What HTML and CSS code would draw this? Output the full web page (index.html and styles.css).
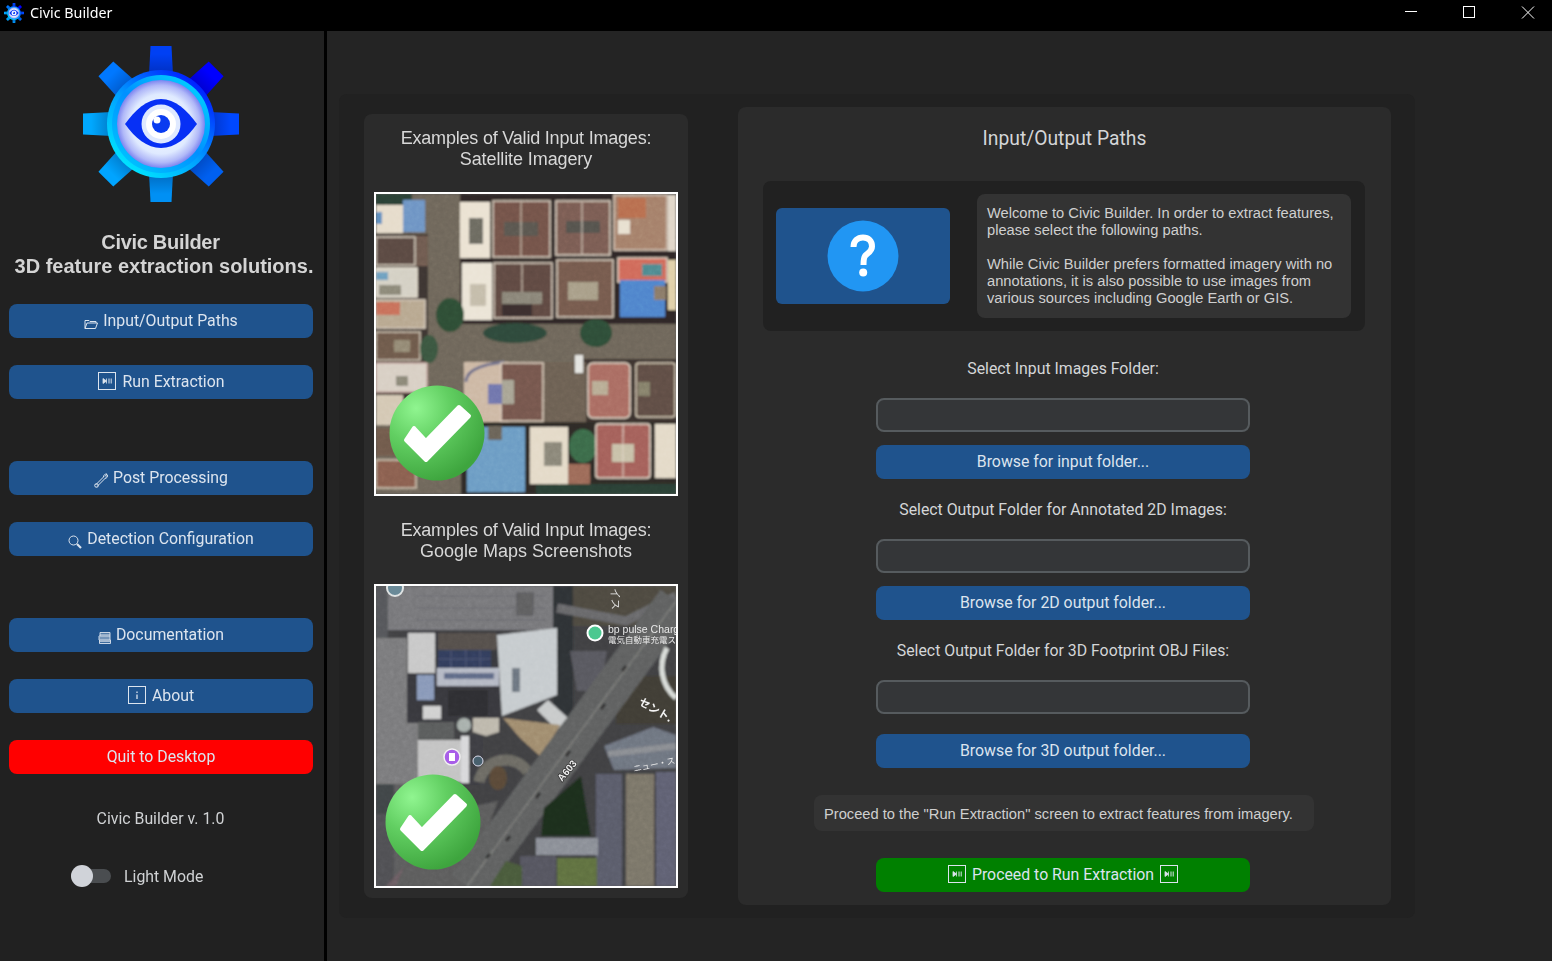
FILE: index.html
```html
<!DOCTYPE html>
<html lang="en">
<head>
<meta charset="utf-8">
<title>Civic Builder</title>
<link rel="stylesheet" href="styles.css">
</head>
<body>
<svg class="defs" width="0" height="0" aria-hidden="true">
  <defs>
    <linearGradient id="toothShade" gradientUnits="userSpaceOnUse" x1="0" y1="8" x2="0" y2="30">
      <stop offset="0" stop-color="#000030" stop-opacity="0"/>
      <stop offset="1" stop-color="#000030" stop-opacity="0.28"/>
    </linearGradient>
    <linearGradient id="ringGrad" gradientUnits="userSpaceOnUse" x1="40" y1="125" x2="118" y2="30">
      <stop offset="0" stop-color="#00eaff"/>
      <stop offset="0.45" stop-color="#00a0ff"/>
      <stop offset="1" stop-color="#0010ff"/>
    </linearGradient>
    <linearGradient id="ringInner" gradientUnits="userSpaceOnUse" x1="40" y1="125" x2="118" y2="30">
      <stop offset="0" stop-color="#00c8ff"/>
      <stop offset="0.5" stop-color="#0090ff"/>
      <stop offset="1" stop-color="#00d8ff"/>
    </linearGradient>
    <radialGradient id="discGrad" cx="0.5" cy="0.5" r="0.5">
      <stop offset="0" stop-color="#ffffff"/>
      <stop offset="0.68" stop-color="#dfeaff"/>
      <stop offset="0.88" stop-color="#b0b8f8"/>
      <stop offset="1" stop-color="#7c84f0"/>
    </radialGradient>
    <radialGradient id="ballGrad" cx="0.28" cy="0.24" r="0.8">
      <stop offset="0" stop-color="#90f590"/>
      <stop offset="0.45" stop-color="#62cf62"/>
      <stop offset="1" stop-color="#3ea53e"/>
    </radialGradient>
    <filter id="soft" x="-2%" y="-2%" width="104%" height="104%"><feGaussianBlur stdDeviation="1"/></filter>
    <filter id="noise" x="0" y="0" width="100%" height="100%">
      <feTurbulence type="fractalNoise" baseFrequency="0.22" numOctaves="3" seed="4"/>
      <feColorMatrix type="saturate" values="0"/>
    </filter>
    <g id="tooth">
      <path d="M67.500 0H88.500L90 30H66Z"/>
      <path d="M67.500 0H88.500L90 30H66Z" fill="url(#toothShade)"/>
    </g>
    <symbol id="logo" viewBox="0 0 156 156">
      <use href="#tooth" fill="#0040f4"/>
      <use href="#tooth" fill="#0000ff" transform="rotate(45 78 78)"/>
      <use href="#tooth" fill="#0048ff" transform="rotate(90 78 78)"/>
      <use href="#tooth" fill="#0060f0" transform="rotate(135 78 78)"/>
      <use href="#tooth" fill="#0090f4" transform="rotate(180 78 78)"/>
      <use href="#tooth" fill="#00a4ff" transform="rotate(225 78 78)"/>
      <use href="#tooth" fill="#00a8ff" transform="rotate(270 78 78)"/>
      <use href="#tooth" fill="#0078ff" transform="rotate(315 78 78)"/>
      <circle cx="78" cy="78" r="54" fill="url(#ringGrad)"/>
      <circle cx="78" cy="78" r="49" fill="url(#ringInner)"/>
      <circle cx="78" cy="78" r="44" fill="url(#discGrad)"/>
      <path d="M42 78C52 64 64 53 78 53S104 64 114 78C104 92 92 102 78 102S52 92 42 78Z" fill="#0730f5"/>
      <circle cx="78" cy="78" r="19.500" fill="#dfe9ff"/>
      <circle cx="78" cy="78" r="15" fill="#ffffff"/>
      <circle cx="78" cy="78" r="9" fill="#0a3cf0"/>
      <circle cx="74" cy="74" r="3.500" fill="#ffffff"/>
    </symbol>
    <symbol id="ic-run" viewBox="0 0 18 18">
      <rect x="0.500" y="0.500" width="17" height="17" fill="none" stroke="currentColor"/>
      <path d="M5 6.500V11.500L8.500 9Z M8.500 6.500V11.500" fill="currentColor" stroke="currentColor" stroke-width="0.800"/>
      <path d="M11 6.500V11.500M13.200 6.500V11.500" stroke="currentColor" fill="none"/>
    </symbol>
    <symbol id="ball" viewBox="-48 -48 96 96">
      <circle r="47.500" fill="url(#ballGrad)"/>
      <path d="M-31 7-23-5-11 8 22-26 32-17-11 27Z" fill="#fff" stroke="#fff" stroke-width="4" stroke-linejoin="round"/>
    </symbol>
  </defs>
</svg>

<header class="titlebar">
  <svg class="title-icon" aria-hidden="true"><use href="#logo"/></svg>
  <span class="title-text">Civic Builder</span>
  <div class="win-controls">
    <svg class="win-btn" viewBox="0 0 58 31" aria-hidden="true"><path d="M27 11.500H39" stroke="#fff"/></svg>
    <svg class="win-btn" viewBox="0 0 58 31" aria-hidden="true"><rect x="27.500" y="6.500" width="11" height="11" fill="none" stroke="#fff"/></svg>
    <svg class="win-btn" viewBox="0 0 58 31" aria-hidden="true"><path d="M28 6.500 40 18.500M40 6.500 28 18.500" stroke="#fff"/></svg>
  </div>
</header>

<div class="app">
  <aside class="sidebar">
    <svg class="logo" aria-hidden="true"><use href="#logo"/></svg>
    <h1 class="brand"><span class="brand-top">Civic Builder</span><span class="brand-sub">3D feature extraction solutions.</span></h1>

    <nav class="nav">
      <div class="nav-group">
        <button class="btn">
          <svg class="ic ic-low" width="14" height="12" viewBox="0 0 14 12" aria-hidden="true"><path d="M1 10.500V2.500H5L6 3.500H12V5M1 10.500H11.500L13.500 5H3Z" fill="none" stroke="currentColor"/></svg>
          <span>Input/Output Paths</span>
        </button>
        <button class="btn btn-run">
          <svg class="ic ic-box" width="18" height="18" aria-hidden="true"><use href="#ic-run"/></svg>
          <span>Run Extraction</span>
        </button>
      </div>
      <div class="nav-group">
        <button class="btn">
          <svg class="ic ic-low" width="14" height="15" viewBox="0 0 14 15" aria-hidden="true"><path d="M1.500 12 10 3.500M3 13.500 11.500 5" stroke="currentColor" fill="none"/><circle cx="2.500" cy="12.500" r="1.800" fill="none" stroke="currentColor"/><path d="M9.500 4C9.500 2 11 .8 13 1L11.500 2.800 12.300 3.500 13.800 1.800C14 3.800 12.800 5.300 11 5.200" fill="none" stroke="currentColor"/></svg>
          <span>Post Processing</span>
        </button>
        <button class="btn">
          <svg class="ic ic-low" width="14" height="14" viewBox="0 0 14 14" aria-hidden="true"><circle cx="5.500" cy="5.500" r="4.500" fill="none" stroke="currentColor"/><path d="M9 9 13 13" stroke="currentColor" stroke-width="2.200"/></svg>
          <span>Detection Configuration</span>
        </button>
      </div>
      <div class="nav-group">
        <button class="btn">
          <svg class="ic ic-low" width="13" height="12" viewBox="0 0 13 12" aria-hidden="true"><path d="M2 .5H12V4H2ZM2 2.200H12M1 4H12V8H1ZM1 6H12M1.500 8H12.500V11.500H1.500ZM1.500 9.700H12.500" fill="none" stroke="currentColor" stroke-width="0.900"/></svg>
          <span>Documentation</span>
        </button>
        <button class="btn">
          <svg class="ic ic-box" width="18" height="18" viewBox="0 0 18 18" aria-hidden="true"><rect x="0.500" y="0.500" width="17" height="17" fill="none" stroke="currentColor"/><path d="M9 5.500V7M9 8.500V13" stroke="currentColor" stroke-width="1.300"/></svg>
          <span>About</span>
        </button>
        <button class="btn btn-danger"><span>Quit to Desktop</span></button>
      </div>
    </nav>

    <p class="version">Civic Builder v. 1.0</p>
    <div class="mode-row">
      <span class="switch"><span class="switch-knob"></span></span>
      <span class="mode-label">Light Mode</span>
    </div>
  </aside>

  <main class="main">
    <section class="panel">
      <div class="examples">
        <h2 class="ex-title"><span class="ex-lead">Examples of Valid Input Images:</span><br><span class="ex-sub">Satellite Imagery</span></h2>
        <svg class="photo" viewBox="0 0 300 300" role="img" aria-label="Satellite imagery example">
          <g filter="url(#soft)">
            <rect width="300" height="300" fill="#6e665a"/>
            <rect x="84" y="0" width="216" height="130" fill="#2f2825"/>
            <rect x="0" y="40" width="52" height="190" fill="#3e3530"/>
            <rect x="205" y="165" width="95" height="135" fill="#3a332d"/>
            <rect x="85" y="228" width="215" height="72" fill="#2e2a28"/>
            <rect x="0" y="0" width="36" height="11" fill="#2c4036"/>
            <rect x="0" y="11" width="27" height="28" fill="#e6dccb"/><rect x="0" y="18" width="6" height="12" fill="#5f8fc0"/>
            <rect x="27" y="6" width="22" height="32" fill="#6e94c4"/>
            <rect x="0" y="43" width="39" height="28" fill="#5a4a42" stroke="#d9cdbd" stroke-width="1.500"/>
            <rect x="40" y="42" width="12" height="30" fill="#6e5a50"/>
            <rect x="0" y="74" width="41" height="29" fill="#d4d0c4" stroke="#e8e0d0" stroke-width="1.500"/><rect x="0" y="78" width="12" height="8" fill="#6ea0c0"/><rect x="3" y="91" width="22" height="10" fill="#8c8878"/>
            <rect x="0" y="106" width="49" height="28" fill="#b8a890" stroke="#d8ccbc" stroke-width="1.500"/><rect x="0" y="108" width="24" height="13" fill="#c8705a"/>
            <rect x="0" y="138" width="44" height="28" fill="#6e5a4c" stroke="#cfc3b0" stroke-width="1.500"/><rect x="18" y="146" width="16" height="12" fill="#948a74"/>
            <rect x="0" y="169" width="51" height="29" fill="#d8cfc4" stroke="#c8a8a0" stroke-width="1.500"/><rect x="20" y="182" width="12" height="10" fill="#8c8878"/>
            <rect x="0" y="201" width="27" height="30" fill="#d4c8b4"/>
            <rect x="0" y="234" width="24" height="28" fill="#705a4c"/>
            <rect x="0" y="266" width="40" height="28" fill="#8a5e50" stroke="#cfc3b0" stroke-width="1.500"/>
            <rect x="84" y="8" width="30" height="56" fill="#ebe2d2"/><rect x="93" y="24" width="14" height="26" fill="#6c6a60"/>
            <rect x="117" y="7" width="57" height="56" fill="#735349" stroke="#dccfc0" stroke-width="1.500"/><rect x="128" y="28" width="34" height="14" fill="#5a5650"/><path d="M145 8V62" stroke="#d8ccbc"/>
            <rect x="180" y="7" width="54" height="54" fill="#7a5c52" stroke="#e0d4c4" stroke-width="1.500"/><rect x="190" y="27" width="34" height="12" fill="#54524e"/><path d="M206 8V60" stroke="#e0d4c4"/>
            <rect x="238" y="1" width="53" height="55" fill="#a5806a" stroke="#dcccbc" stroke-width="1.500"/><rect x="242" y="4" width="28" height="20" fill="#b86e50"/><rect x="242" y="26" width="12" height="14" fill="#e8e0d0"/>
            <rect x="292" y="1" width="8" height="56" fill="#e0d6c8"/>
            <rect x="86" y="69" width="30" height="57" fill="#ebe4d6"/><rect x="94" y="90" width="16" height="22" fill="#c4bcaa"/>
            <rect x="118" y="69" width="58" height="55" fill="#5f4842" stroke="#dccfc0" stroke-width="1.500"/><rect x="126" y="98" width="40" height="12" fill="#8a8578"/><rect x="126" y="110" width="30" height="12" fill="#3a2e2e"/><path d="M146 70V98" stroke="#dccfc0"/>
            <rect x="181" y="66" width="56" height="57" fill="#755a4e" stroke="#dccfc0" stroke-width="1.500"/><rect x="192" y="88" width="30" height="18" fill="#a89e88"/>
            <rect x="242" y="64" width="49" height="24" fill="#d06a5a" stroke="#e0d4c4" stroke-width="1.500"/><rect x="266" y="70" width="20" height="12" fill="#4f8a90"/>
            <rect x="244" y="86" width="45" height="37" fill="#4f84cc"/><rect x="278" y="92" width="12" height="14" fill="#8a7a68"/>
            <rect x="292" y="66" width="8" height="50" fill="#e0d0a8"/>
            <ellipse cx="74" cy="121" rx="14" ry="17" fill="#2f4d36"/>
            <ellipse cx="139" cy="139" rx="32" ry="10" fill="#2e4a3a"/>
            <ellipse cx="220" cy="139" rx="16" ry="14" fill="#2f4d38"/>
            <ellipse cx="53" cy="155" rx="9" ry="14" fill="#3a5640"/>
            <rect x="88" y="168" width="45" height="60" fill="#cdb8a4"/>
            <path d="M90 188Q90 172 128 168" stroke="#70708a" stroke-width="3" fill="none"/>
            <rect x="125" y="169" width="42" height="58" fill="#74574d" stroke="#ddcdbc" stroke-width="1.500"/>
            <rect x="112" y="190" width="20" height="20" fill="#6f74ac"/><rect x="126" y="186" width="12" height="24" fill="#a8a494"/>
            <rect x="168" y="168" width="42" height="60" fill="#6c6152"/>
            <rect x="199" y="161" width="8" height="18" fill="#e4e4e0"/>
            <rect x="212" y="169" width="42" height="55" rx="5" fill="#aa6c62" stroke="#e4d8c8" stroke-width="1.500"/><rect x="216" y="187" width="16" height="14" fill="#b8ac94"/>
            <rect x="260" y="169" width="39" height="54" rx="3" fill="#5e4d44" stroke="#d4c8b4" stroke-width="1.500"/><rect x="262" y="188" width="12" height="14" fill="#85806a"/>
            <rect x="91" y="233" width="58" height="65" fill="#6c9cc4"/><rect x="112" y="232" width="14" height="14" fill="#6a6458"/>
            <rect x="154" y="233" width="38" height="57" fill="#e4dac8"/><rect x="168" y="248" width="18" height="24" fill="#8a8678"/>
            <rect x="192" y="270" width="22" height="20" fill="#9c6a58"/>
            <ellipse cx="207" cy="252" rx="14" ry="17" fill="#3a6a48"/>
            <rect x="220" y="230" width="54" height="54" rx="3" fill="#a4605a" stroke="#e4d8c8" stroke-width="1.500"/><rect x="236" y="250" width="22" height="18" fill="#c8c0a8"/><path d="M247 230V284" stroke="#e4d8c8"/>
            <rect x="279" y="230" width="21" height="54" fill="#e4dac8"/>
            <rect x="160" y="290" width="140" height="10" fill="#2a4034"/>
          </g>
          <rect class="grain" width="300" height="300" filter="url(#noise)"/>
          <use href="#ball" x="13" y="191" width="96" height="96"/>
        </svg>

        <h2 class="ex-title ex-title-second"><span class="ex-lead">Examples of Valid Input Images:</span><br>Google Maps Screenshots</h2>
        <svg class="photo" viewBox="0 0 300 300" role="img" aria-label="Google Maps screenshot example">
          <g filter="url(#soft)">
            <rect width="300" height="300" fill="#3f3f42"/>
            <rect x="0" y="0" width="177" height="44" fill="#77777a"/>
            <path d="M40 10H170M40 22H170M40 34H170" stroke="#6a6a6d"/>
            <rect x="140" y="6" width="18" height="24" fill="#5e5e60"/>
            <rect x="0" y="0" width="12" height="52" fill="#55565a"/>
            <rect x="0" y="52" width="42" height="148" fill="#7a7a7c"/>
            <rect x="0" y="198" width="18" height="30" fill="#3f4447"/>
            <rect x="18" y="198" width="30" height="102" fill="#5b5b5d"/>
            <rect x="0" y="228" width="18" height="72" fill="#505052"/>
            <path d="M10 300 45 262 70 300Z" fill="#6b5c62"/>
            <rect x="177" y="0" width="20" height="140" fill="#2e3036"/>
            <rect x="197" y="0" width="103" height="40" fill="#4d4a40"/>
            <path d="M181 22 250 35 300 10" stroke="#68686a" stroke-width="9" fill="none"/>
            <rect x="31" y="45" width="93" height="92" fill="#39393d"/>
            <rect x="32" y="47" width="27" height="40" fill="#c8c8c8"/>
            <rect x="62" y="47" width="59" height="17" fill="#55504c"/>
            <rect x="62" y="64" width="53" height="18" fill="#333c5c"/>
            <path d="M75 64V82M90 64V82M104 64V82M62 73H115" stroke="#4c5674"/>
            <rect x="61" y="82" width="62" height="18" fill="#b4b8c4"/>
            <rect x="68" y="87" width="50" height="6" fill="#5e6a86"/>
            <rect x="41" y="89" width="17" height="25" fill="#8898b8"/>
            <rect x="72" y="104" width="40" height="26" fill="#2f2f33"/>
            <rect x="47" y="120" width="18" height="13" fill="#d0d0d0"/>
            <path d="M121 49 181 42 181 109 126 130Z" fill="#c6cbce"/>
            <rect x="136" y="82" width="8" height="24" fill="#6c7480"/>
            <path d="M161 124 172 114 192 132 181 144Z" fill="#c8caca"/>
            <path d="M97 132H123V146L110 150 97 146Z" fill="#bdb8ac"/>
            <rect x="42" y="136" width="36" height="17" fill="#5a5c5c"/>
            <circle cx="88" cy="139" r="7" fill="#a8b0ac"/>
            <rect x="42" y="154" width="43" height="42" fill="#c3c3c3"/>
            <rect x="85" y="150" width="8" height="47" fill="#d8d8da"/>
            <rect x="94" y="149" width="13" height="50" fill="#3c3e42"/>
            <path d="M127 132 184 139 166 172 144 152Z" fill="#a08c6e"/>
            <path d="M103 196A27 27 0 0 1 152 186" stroke="#6c6a64" stroke-width="11" fill="none"/>
            <ellipse cx="122" cy="192" rx="9" ry="12" fill="#5a4a38"/>
            <path d="M50 230 122 215 90 300H20Z" fill="#5c5c5c"/>
            <path d="M194 65 231 65 224 105 201 105Z" fill="#58585e"/>
            <rect x="240" y="90" width="60" height="48" fill="#403c34"/>
            <path d="M91 300 300 15" stroke="#5f6060" stroke-width="38" fill="none"/>
            <path d="M91 300 300 15" stroke="#7a7a78" stroke-width="1.500" fill="none"/>
            <path d="M130 255 134 250M160 212 164 207M190 170 194 165M225 123 229 118M110 272 114 268M246 85 250 80" stroke="#333" stroke-width="3"/>
            <path d="M291 62A40 40 0 0 0 300 112" stroke="#d8dcd8" stroke-width="5" fill="none"/>
            <path d="M228 160 277 141 300 149V182L238 184Z" fill="#6e7480"/>
            <path d="M232 168 300 160" stroke="#8a8d92" stroke-width="6"/>
            <rect x="220" y="188" width="26" height="112" fill="#5a5c6a"/>
            <rect x="250" y="188" width="28" height="112" fill="#7a7468"/>
            <rect x="280" y="186" width="20" height="114" fill="#5e6072"/>
            <path d="M168 222 205 190 215 250 165 250Z" fill="#1f2d1e"/>
            <rect x="160" y="252" width="62" height="17" fill="#8a8e96"/>
            <rect x="181" y="272" width="40" height="28" fill="#5f7040"/>
            <rect x="144" y="270" width="36" height="30" fill="#55555f"/>
            <path d="M114 300 130 275 146 280V300Z" fill="#4a5a3a"/>
          </g>
          <rect class="grain" width="300" height="300" filter="url(#noise)"/>
          <circle cx="19" cy="2" r="8" fill="#6a8a98" stroke="#e0e4e4" stroke-width="2"/>
          <circle cx="219" cy="47" r="8.500" fill="#ffffff"/><circle cx="219" cy="47" r="6.500" fill="#4cc890"/>
          <text class="map-label" x="232" y="47">bp pulse Charg</text>
          <text class="map-label map-jp" x="232" y="57">電気自動車充電ス</text>
          <text class="map-label" transform="rotate(90 236 2)" x="236" y="2">イス</text>
          <text class="map-label map-big" transform="rotate(30 262 118)" x="262" y="118">セント.</text>
          <text class="map-label map-jp" transform="rotate(-12 258 186)" x="258" y="186">ニュー・ス</text>
          <text class="map-label map-a603" transform="rotate(-50 186 196)" x="186" y="196">A603</text>
          <circle cx="76" cy="171" r="8" fill="#a85ee8" stroke="#f2f2f2" stroke-width="1.500"/><rect x="73" y="167" width="6" height="8" fill="#fff"/>
          <circle cx="102" cy="175" r="5" fill="#48606e" stroke="#dde" stroke-width="1"/>
          <use href="#ball" x="9" y="188" width="96" height="96"/>
        </svg>
      </div>

      <div class="paths">
        <h2 class="paths-title">Input/Output Paths</h2>
        <div class="intro">
          <button class="help-btn" aria-label="Help">
            <svg width="72" height="72" viewBox="0 0 72 72" aria-hidden="true"><circle cx="36" cy="36" r="35.500" fill="#2196f3"/><path d="M26.500 27C26.500 21 30.500 17.500 36 17.500S45 21 45 26.500C45 31.500 40.500 33 38 36 36.500 38 36.500 41 36.500 45" fill="none" stroke="#fff" stroke-width="6"/><circle cx="36.200" cy="52.500" r="4" fill="#fff"/></svg>
          </button>
          <p class="intro-text">Welcome to Civic Builder. In order to extract features,<br>please select the following paths.<br><br>While Civic Builder prefers formatted imagery with no<br>annotations, it is also possible to use images from<br>various sources including Google Earth or GIS.</p>
        </div>

        <div class="fields">
          <label class="field-label field-label-first">Select Input Images Folder:</label>
          <div class="entry"></div>
          <button class="btn btn-near">Browse for input folder...</button>

          <label class="field-label">Select Output Folder for Annotated 2D Images:</label>
          <div class="entry"></div>
          <button class="btn btn-near">Browse for 2D output folder...</button>

          <label class="field-label">Select Output Folder for 3D Footprint OBJ Files:</label>
          <div class="entry"></div>
          <button class="btn btn-far">Browse for 3D output folder...</button>
        </div>

        <p class="proceed-note">Proceed to the "Run Extraction" screen to extract features from imagery.</p>
        <div class="fields">
          <button class="btn btn-go">
            <svg class="ic ic-box" width="18" height="18" aria-hidden="true"><use href="#ic-run"/></svg>
            <span>Proceed to Run Extraction</span>
            <svg class="ic ic-box" width="18" height="18" aria-hidden="true"><use href="#ic-run"/></svg>
          </button>
        </div>
      </div>
    </section>
  </main>
</div>
</body>
</html>
```

FILE: styles.css
```css
* { box-sizing: border-box; }

html, body {
  margin: 0;
  height: 100%;
  overflow: hidden;
}

body {
  background: #242424;
  color: #dce4ee;
  font-family: Roboto, "Liberation Sans", sans-serif;
  font-size: 15.850px;
  display: flex;
  flex-direction: column;
}

.defs { position: absolute; }

/* Title bar */
.titlebar {
  flex: 0 0 31px;
  display: flex;
  align-items: flex-start;
  background: #000;
  color: #fff;
}
.title-icon { width: 20px; height: 20px; margin: 3px 0 0 4px; }
.title-text {
  margin: 3px 0 0 6px;
  font: 14.300px/20px "Noto Sans", "Open Sans", sans-serif;
}
.win-controls { margin-left: auto; display: flex; }
.win-btn { width: 58px; height: 31px; display: block; }

/* App frame */
.app { flex: 1; display: flex; min-height: 0; }

.sidebar {
  flex: 0 0 327px;
  background: #212121;
  border-right: 3px solid #000;
  padding-top: 15px;
  display: flex;
  flex-direction: column;
}
.logo { width: 156px; height: 156px; margin-left: 83px; display: block; }
.brand {
  margin: 28px 0 0;
  width: 321px;
  font: bold 20px/24px "Liberation Sans", Arial, sans-serif;
  color: #d4d4d4;
  text-align: center;
}
.brand-top { display: block; letter-spacing: -0.3px; }
.brand-sub { display: block; margin-left: 7px; white-space: nowrap; }

.nav {
  margin: 26px 0 0 9px;
  width: 304px;
  display: flex;
  flex-direction: column;
  gap: 62px;
}
.nav-group { display: flex; flex-direction: column; gap: 27px; }

.btn {
  height: 34px;
  width: 100%;
  flex: none;
  border: 0;
  border-radius: 8px;
  background: #1f538d;
  color: #dce4ee;
  font: 15.850px/20px Roboto, sans-serif;
  display: flex;
  align-items: center;
  justify-content: center;
  gap: 6px;
  padding: 0;
}
.btn-danger { background: #ff0000; }
.btn-run { padding-left: 1px; }
.ic { flex: none; display: block; }
.ic-low { margin-top: 5px; margin-right: -1px; }
.ic-box { margin-top: -2px; }

.version {
  margin: 35px 0 0;
  width: 321px;
  text-align: center;
  line-height: 20px;
  color: #d0d2d4;
}
.mode-row {
  margin: 36px 0 0 71px;
  display: flex;
  align-items: center;
  height: 22px;
}
.switch {
  position: relative;
  width: 40px;
  height: 14px;
  border-radius: 7px;
  background: #4a4d50;
}
.switch-knob {
  position: absolute;
  left: 0;
  top: -4px;
  width: 22px;
  height: 22px;
  border-radius: 50%;
  background: #d0d3d9;
}
.mode-label { margin-left: 13px; color: #d0d2d4; }

/* Main */
.main { flex: 1; padding: 63px 0 0 12px; }

.panel {
  width: 1076px;
  height: 824px;
  background: #212121;
  border-radius: 8px;
  display: flex;
  align-items: center;
  padding-left: 25px;
  gap: 50px;
}

.examples {
  width: 324px;
  height: 784px;
  background: #2b2b2b;
  border-radius: 8px;
  padding-top: 14px;
  display: flex;
  flex-direction: column;
  align-items: center;
}
.ex-title {
  margin: 0 0 22px;
  font: 18px/21px "Liberation Sans", Arial, sans-serif;
  color: #d8d8d8;
  text-align: center;
}
.ex-lead { letter-spacing: -0.2px; }
.ex-sub { letter-spacing: -0.1px; }
.ex-title-second { margin-top: 24px; }
.photo {
  width: 304px;
  height: 304px;
  flex: none;
  display: block;
  border: 2px solid #fff;
  background: #555;
}
.grain { mix-blend-mode: overlay; opacity: 0.16; }
.map-label {
  font: 10.500px "Liberation Sans", sans-serif;
  fill: #e8e8e8;
}
.map-jp { font: 8.500px "Noto Sans CJK JP", sans-serif; }
.map-big { font: bold 11px "Noto Sans CJK JP", sans-serif; fill: #f4f4f4; }
.map-a603 {
  font: bold 10px "Liberation Sans", sans-serif;
  fill: #f0f0f0;
  stroke: #333;
  stroke-width: 1.500px;
  paint-order: stroke;
}

.paths {
  width: 653px;
  height: 798px;
  background: #2b2b2b;
  border-radius: 8px;
  padding-top: 20px;
  display: flex;
  flex-direction: column;
  align-items: center;
}
.paths-title {
  margin: 0;
  font: 19.300px/24px Roboto, sans-serif;
  color: #d4d6d8;
}

.intro {
  margin-top: 30px;
  align-self: flex-start;
  margin-left: 25px;
  width: 602px;
  height: 150px;
  flex: none;
  background: #212121;
  border-radius: 8px;
  padding: 0 14px 0 13px;
  display: flex;
  align-items: center;
  justify-content: space-between;
}
.help-btn {
  width: 174px;
  height: 96px;
  border: 0;
  border-radius: 6px;
  background: #1f538d;
  padding: 0;
  display: flex;
  align-items: center;
  justify-content: center;
}
.help-btn svg { display: block; }
.intro-text {
  margin: 0;
  width: 374px;
  height: 124px;
  padding: 11px 10px 0;
  background: #333333;
  border-radius: 8px;
  font: 14.700px/17px "Liberation Sans", Arial, sans-serif;
  color: #cfcfcf;
  white-space: nowrap;
}

.fields {
  align-self: flex-start;
  margin-left: 138px;
  width: 374px;
  display: flex;
  flex-direction: column;
  align-items: center;
}
.field-label {
  display: block;
  margin-top: 21px;
  margin-bottom: -1px;
  line-height: 20px;
  color: #d4d6d8;
  white-space: nowrap;
}
.field-label-first { margin-top: 28px; }
.entry {
  margin-top: 20px;
  width: 374px;
  height: 34px;
  flex: none;
  background: #343638;
  border: 2px solid #565b5e;
  border-radius: 8px;
}
.btn-near { margin-top: 13px; }
.btn-far { margin-top: 20px; }

.proceed-note {
  margin: 27px 0 0;
  align-self: flex-start;
  margin-left: 76px;
  width: 500px;
  height: 36px;
  flex: none;
  padding: 0 10px;
  background: #333333;
  border-radius: 8px;
  font: 14.700px/38px "Liberation Sans", Arial, sans-serif;
  color: #cfcfcf;
  white-space: nowrap;
}
.btn-go { margin-top: 27px; background: #008000; }
```
